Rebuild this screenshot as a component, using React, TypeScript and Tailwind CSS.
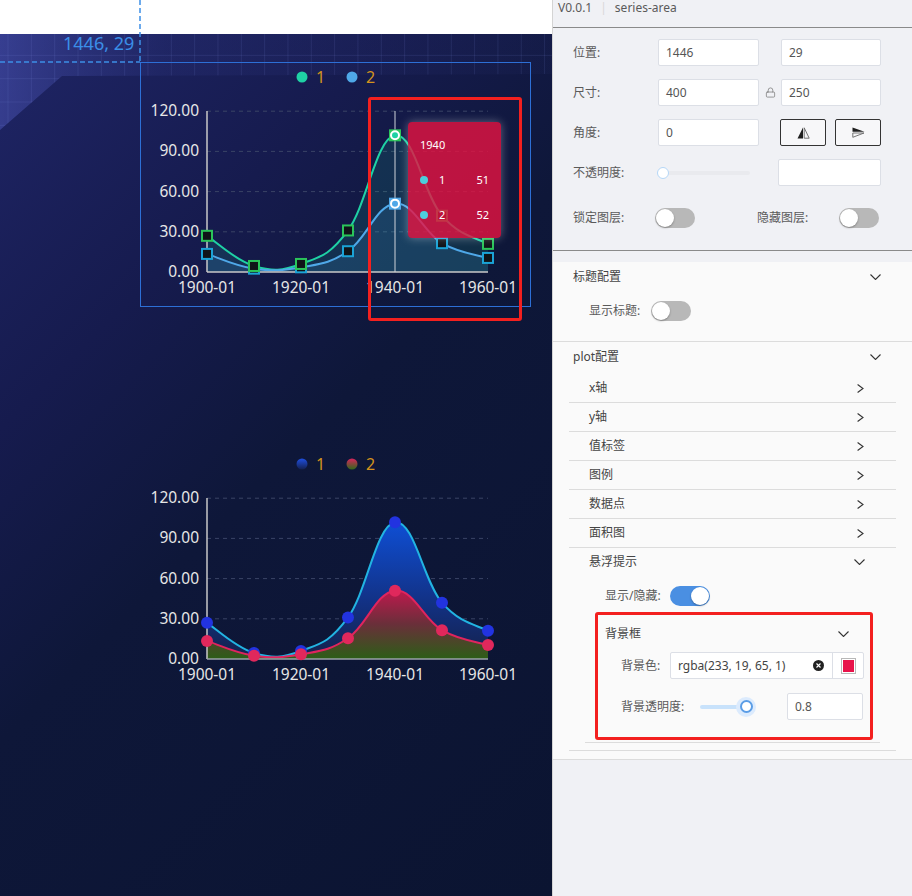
import { Lock } from 'lucide-react'

type Pt = [number, number]

const XS = [207, 254, 301, 348, 395, 442, 488]
const TOTAL = [27, 4.5, 6, 31, 102, 42, 21]
const LOWER = [13.5, 2.5, 3.5, 15.5, 51, 21.5, 10.5]
const STEP = 40.2 / 30
const LABEL_FONT = "'Noto Sans', sans-serif"

function toPts(values: number[], base: number): Pt[] {
  return values.map((v, i) => [XS[i], base - v * STEP])
}

function smoothPath(pts: Pt[], t = 0.2): string {
  let d = `M${pts[0][0]},${pts[0][1]}`
  for (let i = 0; i < pts.length - 1; i++) {
    const p0 = pts[i - 1] ?? pts[i]
    const p1 = pts[i]
    const p2 = pts[i + 1]
    const p3 = pts[i + 2] ?? p2
    const c1x = p1[0] + (p2[0] - p0[0]) * t
    const c1y = p1[1] + (p2[1] - p0[1]) * t
    const c2x = p2[0] - (p3[0] - p1[0]) * t
    const c2y = p2[1] - (p3[1] - p1[1]) * t
    d += ` C${c1x},${c1y} ${c2x},${c2y} ${p2[0]},${p2[1]}`
  }
  return d
}

function areaPath(pts: Pt[], base: number): string {
  return `${smoothPath(pts)} L${pts[pts.length - 1][0]},${base} L${pts[0][0]},${base} Z`
}

function Axes({ base, legend }: { base: number; legend: React.ReactNode }) {
  const ticks = ['0.00', '30.00', '60.00', '90.00', '120.00']
  return (
    <g fontFamily={LABEL_FONT}>
      {legend}
      {ticks.map((t, k) => {
        const y = base - k * 40.2
        return (
          <g key={t}>
            {k > 0 && (
              <line x1={207} x2={488} y1={y} y2={y} stroke="#3a4466" strokeWidth={1} strokeDasharray="4 4" />
            )}
            <text x={199} y={y + 5} textAnchor="end" fontSize={15.5} fill="#e6e6e6">
              {t}
            </text>
          </g>
        )
      })}
      {[0, 2, 4, 6].map((i) => (
        <text key={i} x={XS[i]} y={base + 21} textAnchor="middle" fontSize={15.5} fill="#e6e6e6">
          {`19${i === 0 ? '00' : i * 10}-01`}
        </text>
      ))}
    </g>
  )
}

function TopChart() {
  const base = 272
  const total = toPts(TOTAL, base)
  const lower = toPts(LOWER, base)
  return (
    <g>
      <Axes
        base={base}
        legend={
          <g>
            <circle cx={302} cy={77} r={5.5} fill="#1fd1a5" />
            <text x={316} y={83} fontSize={16} fill="#d4931c">1</text>
            <circle cx={352} cy={77} r={5.5} fill="#4fa8e8" />
            <text x={366} y={83} fontSize={16} fill="#d4931c">2</text>
          </g>
        }
      />
      <path d={areaPath(total, base)} fill="#1fd1a5" fillOpacity={0.13} />
      <path d={areaPath(lower, base)} fill="#4fa8e8" fillOpacity={0.14} />
      <path d={smoothPath(total)} fill="none" stroke="#1fd1a5" strokeWidth={2} />
      <path d={smoothPath(lower)} fill="none" stroke="#4fa8e8" strokeWidth={2} />
      <line x1={207} x2={207} y1={111} y2={base} stroke="#c8c8c8" strokeWidth={1.5} />
      <line x1={207} x2={488} y1={base} y2={base} stroke="#c8c8c8" strokeWidth={1.5} />
      <line x1={395} x2={395} y1={111} y2={base} stroke="#cfd3da" strokeWidth={1} />
      {lower.map(([x, y], i) =>
        i === 4 ? (
          <g key={i}>
            <rect x={x - 6} y={y - 6} width={12} height={12} fill="#4fa8e8" />
            <circle cx={x} cy={y} r={4} fill="#4fa8e8" stroke="#fff" strokeWidth={2} />
          </g>
        ) : (
          <rect key={i} x={x - 5} y={y - 5} width={10} height={10} fill="#101418" stroke="#1ba3d6" strokeWidth={2} />
        ),
      )}
      {total.map(([x, y], i) =>
        i === 4 ? (
          <g key={i}>
            <rect x={x - 6} y={y - 6} width={12} height={12} fill="#2bc45a" />
            <circle cx={x} cy={y} r={4} fill="#1fd1a5" stroke="#fff" strokeWidth={2} />
          </g>
        ) : (
          <rect key={i} x={x - 5} y={y - 5} width={10} height={10} fill="#101418" stroke="#2bc45a" strokeWidth={2} />
        ),
      )}
    </g>
  )
}

function BottomChart() {
  const base = 659
  const total = toPts(TOTAL, base)
  const lower = toPts(LOWER, base)
  return (
    <g>
      <defs>
        <linearGradient id="blueArea" x1="0" y1="521" x2="0" y2="659" gradientUnits="userSpaceOnUse">
          <stop offset="0" stopColor="#0e4fd6" />
          <stop offset="0.55" stopColor="#12338a" />
          <stop offset="1" stopColor="#14214a" />
        </linearGradient>
        <linearGradient id="redArea" x1="0" y1="589" x2="0" y2="659" gradientUnits="userSpaceOnUse">
          <stop offset="0" stopColor="#c2184e" />
          <stop offset="0.5" stopColor="#6a2f3a" />
          <stop offset="1" stopColor="#2c5e17" />
        </linearGradient>
        <linearGradient id="dotBlue" x1="0" y1="0" x2="0" y2="1">
          <stop offset="0" stopColor="#1f4fe0" />
          <stop offset="1" stopColor="#132050" />
        </linearGradient>
        <linearGradient id="dotRed" x1="0" y1="0" x2="0" y2="1">
          <stop offset="0" stopColor="#d8245c" />
          <stop offset="1" stopColor="#2f6a1a" />
        </linearGradient>
      </defs>
      <Axes
        base={base}
        legend={
          <g>
            <circle cx={302} cy={464} r={5.5} fill="url(#dotBlue)" />
            <text x={316} y={470} fontSize={16} fill="#d4931c">1</text>
            <circle cx={352} cy={464} r={5.5} fill="url(#dotRed)" />
            <text x={366} y={470} fontSize={16} fill="#d4931c">2</text>
          </g>
        }
      />
      <path d={areaPath(total, base)} fill="url(#blueArea)" />
      <path d={areaPath(lower, base)} fill="url(#redArea)" />
      <path d={smoothPath(total)} fill="none" stroke="#22b4e2" strokeWidth={2} />
      <path d={smoothPath(lower)} fill="none" stroke="#e0245e" strokeWidth={2} />
      <line x1={207} x2={207} y1={498} y2={base} stroke="#c8c8c8" strokeWidth={1.5} />
      <line x1={207} x2={488} y1={base} y2={base} stroke="#9aa0aa" strokeWidth={1.5} />
      {total.map(([x, y], i) => (
        <circle key={i} cx={x} cy={y} r={6} fill="#2233e0" />
      ))}
      {lower.map(([x, y], i) => (
        <circle key={i} cx={x} cy={y} r={6} fill="#e0285c" />
      ))}
    </g>
  )
}

function Canvas() {
  const gridX = Array.from({ length: 24 }, (_, k) => 8 + k * 23.33)
  const gridY = Array.from({ length: 5 }, (_, k) => 32 + k * 23.33)
  return (
    <div className="relative h-[896px] w-[552px] shrink-0 overflow-hidden">
      <div className="h-[34px] bg-white" />
      <div className="h-[862px] bg-[linear-gradient(135deg,#1f2566_0%,#161b4e_28%,#0e1739_50%,#0b1431_100%)]" />
      <svg className="absolute inset-0" width={552} height={896}>
        <defs>
          <clipPath id="band">
            <polygon points="0,34 552,34 552,74 62,76 0,130" />
          </clipPath>
          <linearGradient id="bandFill" x1="0" y1="0" x2="1" y2="0">
            <stop offset="0" stopColor="#5a64d0" stopOpacity="0.4" />
            <stop offset="0.3" stopColor="#3a449a" stopOpacity="0.15" />
            <stop offset="1" stopColor="#2a3270" stopOpacity="0.1" />
          </linearGradient>
        </defs>
        <g clipPath="url(#band)">
          <rect x={0} y={34} width={552} height={100} fill="url(#bandFill)" />
          {gridX.map((x) => (
            <line key={x} x1={x} x2={x} y1={34} y2={130} stroke="#8c9cf0" strokeOpacity={0.12} />
          ))}
          {gridY.map((y) => (
            <line key={y} x1={0} x2={552} y1={y} y2={y} stroke="#8c9cf0" strokeOpacity={0.12} />
          ))}
        </g>
        <line x1={140} x2={140} y1={0} y2={62} stroke="#3d8fe6" strokeWidth={1.5} strokeDasharray="5 3" />
        <line x1={0} x2={140} y1={62} y2={62} stroke="#3d8fe6" strokeWidth={1.5} strokeDasharray="5 3" />
        <text x={63} y={50} fontSize={18} fill="#3b8fe8" fontFamily={LABEL_FONT}>
          1446, 29
        </text>
        <TopChart />
        <BottomChart />
      </svg>

      <div className="absolute left-[140px] top-[62px] h-[245px] w-[391px] border border-[#2d6fd6]" />

      <div className="absolute left-[408px] top-[122px] flex h-[116px] w-[93px] flex-col rounded-[4px] bg-[rgba(233,19,65,0.8)] px-[12px] pt-[15px] font-['Noto_Sans',sans-serif] text-[11px] leading-[16px] text-white shadow-[0_0_10px_rgba(255,255,255,0.35)]">
        <div>1940</div>
        <div className="mt-[19px] flex items-center">
          <span className="h-[8px] w-[8px] rounded-full bg-[#4ccfdc]" />
          <span className="ml-[11px]">1</span>
          <span className="ml-auto">51</span>
        </div>
        <div className="mt-[19px] flex items-center">
          <span className="h-[8px] w-[8px] rounded-full bg-[#4ccfdc]" />
          <span className="ml-[11px]">2</span>
          <span className="ml-auto">52</span>
        </div>
      </div>

      <div className="absolute left-[368px] top-[97px] h-[224px] w-[154px] rounded-[3px] border-[3px] border-[#f3201f]" />
    </div>
  )
}

function Toggle({ on = false }: { on?: boolean }) {
  return (
    <div
      className={`flex h-[20px] w-[40px] items-center rounded-full px-[1px] ${
        on ? 'justify-end bg-[#4a8fe2]' : 'justify-start bg-[#b8b8b8]'
      }`}
    >
      <div className="h-[18px] w-[18px] rounded-full bg-white shadow-[0_1px_2px_rgba(0,0,0,0.3)]" />
    </div>
  )
}

function Field({ value, className = '' }: { value?: string; className?: string }) {
  return (
    <div
      className={`flex h-[27px] items-center rounded-[2px] border border-[#dcdfe6] bg-white pl-[7px] text-[12px] text-[#555] ${className}`}
    >
      {value}
    </div>
  )
}

function ChevronDownIcon() {
  return (
    <svg width="11" height="6" viewBox="0 0 11 6" fill="none">
      <path d="M0.5 0.5 L5.5 5.5 L10.5 0.5" stroke="#333" strokeWidth="1.1" />
    </svg>
  )
}

function ChevronRightIcon() {
  return (
    <svg width="7" height="9" viewBox="0 0 7 9" fill="none">
      <path d="M0.6 0.5 L6 4.5 L0.6 8.5" stroke="#333" strokeWidth="1.1" />
    </svg>
  )
}

function FlipHIcon() {
  return (
    <svg width="13" height="12" viewBox="0 0 13 12">
      <polygon points="6,0.5 6,11.5 0.5,11.5" fill="#1f1f1f" />
      <polygon points="7.2,0.8 7.2,11.2 12.2,11.2" fill="none" stroke="#666" strokeWidth="0.9" />
    </svg>
  )
}

function FlipVIcon() {
  return (
    <svg width="13" height="11" viewBox="0 0 13 11">
      <polygon points="0.5,0.5 12.5,4.8 0.5,4.8" fill="#1f1f1f" />
      <polygon points="0.8,6 12,6 0.8,10.3" fill="none" stroke="#666" strokeWidth="0.9" />
    </svg>
  )
}

const PLOT_ITEMS = ['x轴', 'y轴', '值标签', '图例', '数据点', '面积图']

function Panel() {
  return (
    <div className="flex h-[896px] w-[360px] flex-col border-l border-[#d4d4d4] bg-[#f0f1f5] font-['Noto_Sans','Noto_Sans_CJK_SC',sans-serif] text-[12px] text-[#5a5a5a]">
      <div className="flex h-[28px] items-start border-b border-[#8a8a8a] pl-[5px] pt-[1px] leading-[14px]">
        <span>V0.0.1</span>
        <span className="mx-[8px] text-[#d8d8d8]">|</span>
        <span>series-area</span>
      </div>

      <div className="flex flex-col gap-[13px] border-b border-[#8a8a8a] pb-[19px] pl-[20px] pt-[11px]">
        <div className="flex h-[27px] items-center">
          <span className="w-[85px]">位置:</span>
          <Field value="1446" className="w-[101px]" />
          <span className="w-[22px]" />
          <Field value="29" className="w-[100px]" />
        </div>
        <div className="flex h-[27px] items-center">
          <span className="w-[85px]">尺寸:</span>
          <Field value="400" className="w-[101px]" />
          <span className="flex w-[22px] justify-center">
            <Lock size={11} strokeWidth={1.6} color="#777" />
          </span>
          <Field value="250" className="w-[100px]" />
        </div>
        <div className="flex h-[27px] items-center">
          <span className="w-[85px]">角度:</span>
          <Field value="0" className="w-[101px]" />
          <div className="ml-[21px] flex h-[27px] w-[46px] items-center justify-center rounded-[2px] border border-[#333] bg-[#f7f7f9]">
            <FlipHIcon />
          </div>
          <div className="ml-[9px] flex h-[27px] w-[46px] items-center justify-center rounded-[2px] border border-[#333] bg-[#f7f7f9]">
            <FlipVIcon />
          </div>
        </div>
        <div className="flex h-[27px] items-center">
          <span className="w-[85px]">不透明度:</span>
          <div className="relative flex h-[27px] w-[92px] items-center">
            <div className="h-[4px] w-full rounded-full bg-[#e9eaee]" />
            <div className="absolute left-[-1px] top-[7.5px] h-[12px] w-[12px] rounded-full border-[1.5px] border-[#b5d7f7] bg-white" />
          </div>
          <Field className="ml-[28px] w-[103px]" />
        </div>
        <div className="mt-[5px] flex h-[27px] items-center">
          <span className="w-[82px]">锁定图层:</span>
          <Toggle />
          <span className="ml-[62px] w-[82px]">隐藏图层:</span>
          <Toggle />
        </div>
      </div>

      <div className="mt-[11px] border-b border-[#dcdcdc] bg-[#fafafa] pb-[20px]">
        <div className="flex h-[29px] items-center justify-between pl-[20px] pr-[31px] text-[#444]">
          <span>标题配置</span>
          <ChevronDownIcon />
        </div>
        <div className="mt-[10px] flex h-[20px] items-center pl-[36px]">
          <span className="w-[62px]">显示标题:</span>
          <Toggle />
        </div>
      </div>

      <div className="border-b border-[#dcdcdc] bg-[#fafafa] pb-[8px]">
        <div className="mb-[2px] flex h-[30px] items-center justify-between pl-[20px] pr-[31px] text-[#444]">
          <span>plot配置</span>
          <ChevronDownIcon />
        </div>
        <div className="mx-[16px] flex flex-col">
          {PLOT_ITEMS.map((item) => (
            <div
              key={item}
              className="flex h-[29px] items-center justify-between border-b border-[#dcdcdc] pl-[20px] pr-[32px] text-[#444]"
            >
              <span>{item}</span>
              <ChevronRightIcon />
            </div>
          ))}
          <div className="border-b border-[#dcdcdc] pb-[7px]">
            <div className="flex h-[28px] items-center justify-between pl-[20px] pr-[31px] text-[#444]">
              <span>悬浮提示</span>
              <ChevronDownIcon />
            </div>
            <div className="mt-[10px] flex h-[20px] items-center pl-[36px]">
              <span className="w-[65px]">显示/隐藏:</span>
              <Toggle on />
            </div>
            <div className="relative mx-[16px] mt-[6px] border-b border-[#dcdcdc] pb-[22px] pt-[8px]">
              <div className="flex h-[28px] items-center justify-between pl-[20px] pr-[31px] text-[#444]">
                <span>背景框</span>
                <ChevronDownIcon />
              </div>
              <div className="mt-[4px] flex h-[27px] items-center pl-[36px]">
                <span className="w-[49px]">背景色:</span>
                <div className="flex h-[27px] w-[194px] items-center rounded-[2px] border border-[#dcdfe6] bg-white">
                  <span className="flex-1 pl-[7px] text-[#444]">rgba(233, 19, 65, 1)</span>
                  <span className="mr-[8px] flex h-[11px] w-[11px] items-center justify-center rounded-full bg-[#222]">
                    <svg width="5" height="5" viewBox="0 0 5 5">
                      <path d="M0.5 0.5 L4.5 4.5 M4.5 0.5 L0.5 4.5" stroke="#fff" strokeWidth="1.1" />
                    </svg>
                  </span>
                  <span className="flex h-full w-[31px] items-center justify-center border-l border-[#dcdfe6]">
                    <span className="flex h-[16px] w-[15px] items-center justify-center border border-[#b8b8b8]">
                      <span className="h-[12px] w-[11px] bg-[#e8134a]" />
                    </span>
                  </span>
                </div>
              </div>
              <div className="mt-[14px] flex h-[27px] items-center pl-[36px]">
                <span className="w-[79px]">背景透明度:</span>
                <div className="relative flex h-[27px] w-[56px] items-center">
                  <div className="h-[4px] w-[46px] rounded-full bg-[#c8e2fb]" />
                  <div className="absolute left-[36px] top-[3.5px] flex h-[20px] w-[20px] items-center justify-center rounded-full bg-[#dcebfd]">
                    <div className="h-[13px] w-[13px] rounded-full border-2 border-[#5b9de6] bg-white" />
                  </div>
                </div>
                <Field value="0.8" className="ml-[31px] w-[76px]" />
              </div>
              <div className="absolute left-[10px] top-0 h-[128px] w-[278px] rounded-[3px] border-[3px] border-[#f3201f]" />
            </div>
          </div>
        </div>
      </div>
    </div>
  )
}

export default function App() {
  return (
    <div className="flex h-[896px] w-[912px] overflow-hidden">
      <Canvas />
      <Panel />
    </div>
  )
}
